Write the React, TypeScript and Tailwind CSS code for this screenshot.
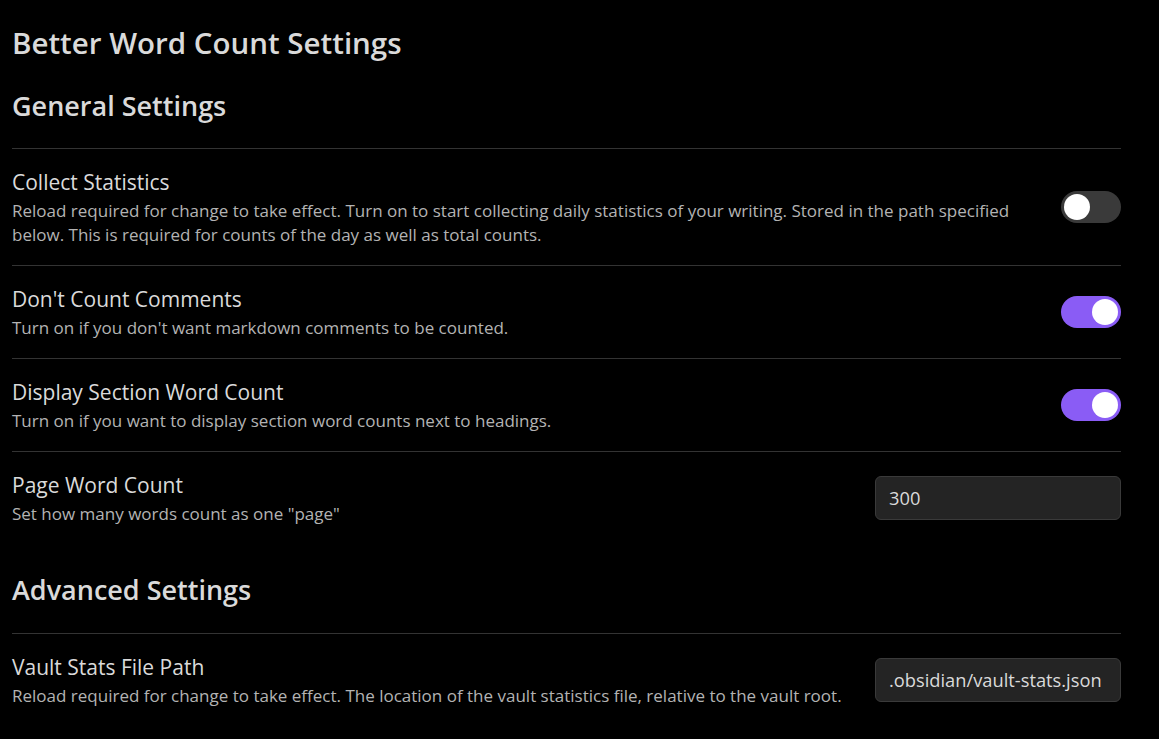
type RowProps = {
  name: string;
  desc: string;
  children: React.ReactNode;
};

const Row = ({ name, desc, children }: RowProps) => (
  <div className="flex items-center gap-6 border-t border-[#333333] py-[18px]">
    <div className="min-w-0 flex-1">
      <div className="text-[21px] leading-[30px] text-[#dadada]">{name}</div>
      <div className="mt-[2px] text-[17px] leading-6 text-[#b3b3b3]">{desc}</div>
    </div>
    <div className="shrink-0">{children}</div>
  </div>
);

const Toggle = ({ on }: { on: boolean }) => (
  <div
    className={`flex h-[32px] w-[60px] items-center rounded-full px-[3px] ${
      on ? "justify-end bg-[#8a5cf5]" : "justify-start bg-[#3a3a3a]"
    }`}
  >
    <div className="h-[26px] w-[26px] rounded-full bg-white" />
  </div>
);

const TextInput = ({ value }: { value: string }) => (
  <div className="flex h-[44px] w-[246px] items-center rounded-md border border-[#3a3a3a] bg-[#242424] px-[13px] text-[18.3px] text-[#dadada]">
    {value}
  </div>
);

export default function App() {
  return (
    <div
      className="min-h-screen bg-black pl-3 pr-[38px] pt-[23px]"
      style={{ fontFamily: '"Open Sans", "Noto Sans", sans-serif' }}
    >
      <h1 className="text-[29.5px] font-semibold leading-10 text-[#dadada]">
        Better Word Count Settings
      </h1>
      <h2 className="mb-6 mt-[25px] text-[27px] font-semibold leading-9 text-[#dadada]">
        General Settings
      </h2>
      <Row
        name="Collect Statistics"
        desc="Reload required for change to take effect. Turn on to start collecting daily statistics of your writing. Stored in the path specified below. This is required for counts of the day as well as total counts."
      >
        <Toggle on={false} />
      </Row>
      <Row
        name="Don't Count Comments"
        desc="Turn on if you don't want markdown comments to be counted."
      >
        <Toggle on />
      </Row>
      <Row
        name="Display Section Word Count"
        desc="Turn on if you want to display section word counts next to headings."
      >
        <Toggle on />
      </Row>
      <Row name="Page Word Count" desc={'Set how many words count as one "page"'}>
        <TextInput value="300" />
      </Row>
      <h2 className="mb-[25px] mt-[28px] text-[27px] font-semibold leading-9 text-[#dadada]">
        Advanced Settings
      </h2>
      <Row
        name="Vault Stats File Path"
        desc="Reload required for change to take effect. The location of the vault statistics file, relative to the vault root."
      >
        <TextInput value=".obsidian/vault-stats.json" />
      </Row>
    </div>
  );
}
